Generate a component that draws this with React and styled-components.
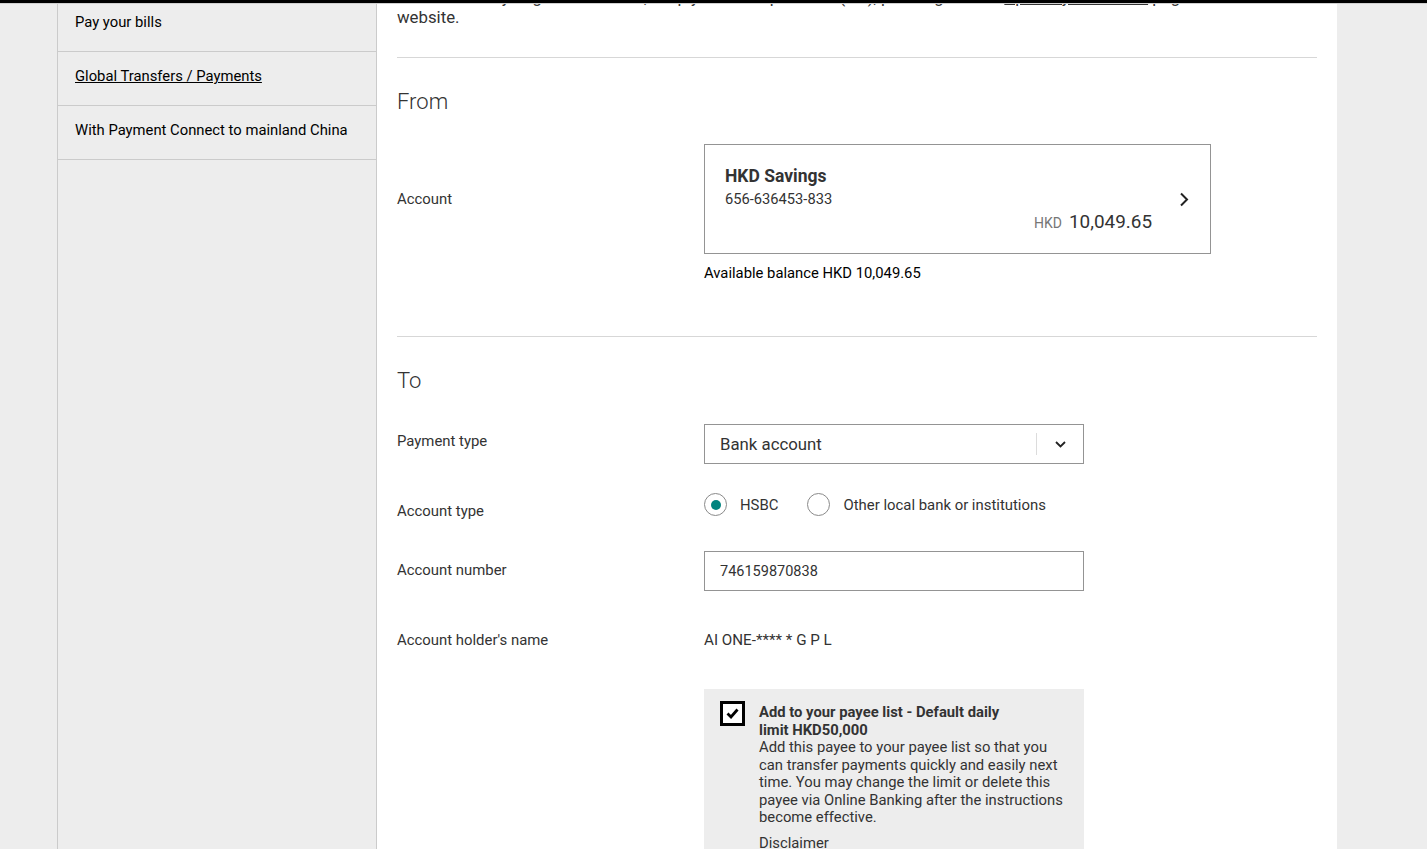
import React from "react";
import styled, { createGlobalStyle } from "styled-components";

const GlobalStyle = createGlobalStyle`
  html, body {
    margin: 0;
    padding: 0;
    background: #ededed;
    font-family: Roboto, "Liberation Sans", Arial, sans-serif;
    color: #333;
    overflow: hidden;
  }
  * { box-sizing: border-box; }
`;

const TopBar = styled.div`
  position: fixed;
  top: 0;
  left: 0;
  right: 0;
  height: 4px;
  background: #000;
  border-bottom: 1px solid #d0d0d0;
  z-index: 5;
`;

const Layout = styled.div`
  display: grid;
  grid-template-columns: 57px 320px 960px 1fr;
  height: 849px;
  overflow: hidden;
  background: #ededed;
`;

const Gutter = styled.div``;

const Sidebar = styled.nav`
  border-left: 1px solid #cbcbcb;
  border-right: 1px solid #cbcbcb;
  background: #ededed;
`;

const NavList = styled.ul`
  list-style: none;
  margin: -2px 0 0;
  padding: 0;
`;

const NavItem = styled.li`
  padding: 16px 17px 20px;
  border-bottom: 1px solid #cbcbcb;
  font-size: 14.8px;
  line-height: 17px;
  color: #000;
  text-decoration: ${(p) => (p.$link ? "underline" : "none")};
`;

const Main = styled.main`
  background: #fff;
  padding: 0 20px;
`;

const Intro = styled.p`
  margin: -13px 0 30px;
  font-size: 16.8px;
  line-height: 20px;
  color: #333;
  white-space: nowrap;
`;

const IntroLink = styled.span`
  text-decoration: underline;
`;

const Divider = styled.hr`
  margin: 0;
  border: 0;
  border-top: 1px solid #d7d7d7;
`;

const SectionTitle = styled.h2`
  margin: 31px 0 0;
  font-size: 22px;
  line-height: 26px;
  font-weight: 300;
  color: #333;
`;

const Row = styled.div`
  display: flex;
  align-items: ${(p) => p.$align || "center"};
  margin-top: ${(p) => p.$top}px;
`;

const Label = styled.div`
  width: 307px;
  flex-shrink: 0;
  font-size: 14.9px;
  line-height: 17px;
  color: #333;
  margin-top: ${(p) => p.$shift || 0}px;
`;

const Field = styled.div`
  display: flex;
  flex-direction: column;
`;

const AccountCard = styled.div`
  width: 507px;
  height: 110px;
  border: 1px solid #949494;
  padding: 20px 21px 19px 20px;
  display: flex;
  align-items: center;
`;

const CardBody = styled.div`
  flex: 1;
  display: flex;
  flex-direction: column;
`;

const CardTitle = styled.div`
  font-size: 17.5px;
  line-height: 21px;
  font-weight: 700;
  color: #333;
`;

const CardNumber = styled.div`
  margin-top: 3px;
  font-size: 14.7px;
  line-height: 18px;
  color: #333;
`;

const Balance = styled.div`
  margin-top: 3px;
  display: flex;
  justify-content: flex-end;
  align-items: baseline;
  gap: 7px;
`;

const Currency = styled.span`
  font-size: 14px;
  color: #767676;
`;

const Amount = styled.span`
  font-size: 18.9px;
  line-height: 22px;
  color: #333;
`;

const ChevronBox = styled.div`
  width: 37px;
  display: flex;
  justify-content: flex-end;
`;

const Available = styled.div`
  margin-top: 11px;
  font-size: 14.8px;
  line-height: 17px;
  color: #000;
`;

const SectionEnd = styled.div`
  height: 54px;
`;

const Select = styled.div`
  width: 380px;
  height: 40px;
  border: 1px solid #949494;
  display: flex;
  align-items: center;
`;

const SelectValue = styled.div`
  flex: 1;
  padding-left: 15px;
  font-size: 16.8px;
  color: #333;
`;

const SelectToggle = styled.div`
  width: 47px;
  height: 22px;
  border-left: 1px solid #dcdcdc;
  display: flex;
  align-items: center;
  justify-content: center;
`;

const RadioGroup = styled.div`
  display: flex;
  align-items: center;
  margin-bottom: 14px;
`;

const RadioOption = styled.label`
  display: flex;
  align-items: center;
  gap: 13px;
  margin-right: 29px;
  font-size: 14.9px;
  line-height: 22px;
  color: #333;
`;

const RadioCircle = styled.span`
  width: 23px;
  height: 23px;
  border-radius: 50%;
  border: 1px solid #8a8a8a;
  display: flex;
  align-items: center;
  justify-content: center;
  &::after {
    content: "";
    width: 10px;
    height: 10px;
    border-radius: 50%;
    background: ${(p) => (p.$checked ? "#00847f" : "transparent")};
  }
`;

const TextInput = styled.div`
  width: 380px;
  height: 40px;
  border: 1px solid #949494;
  padding-left: 15px;
  display: flex;
  align-items: center;
  font-size: 14.5px;
  color: #333;
`;

const Value = styled.div`
  font-size: 15.2px;
  line-height: 17px;
  color: #333;
`;

const PayeePanel = styled.div`
  width: 380px;
  background: #ededed;
  padding: 12px 14px 20px 16px;
  display: flex;
  gap: 14px;
`;

const CheckBox = styled.span`
  width: 25px;
  height: 25px;
  flex-shrink: 0;
  border: 3px solid #000;
  background: #fff;
  display: flex;
  align-items: center;
  justify-content: center;
`;

const PanelText = styled.div`
  display: flex;
  flex-direction: column;
  padding-top: 2px;
  color: #333;
`;

const PanelTitle = styled.div`
  max-width: 262px;
  font-size: 14.8px;
  line-height: 18px;
  font-weight: 700;
`;

const PanelBody = styled.div`
  font-size: 14.8px;
  line-height: 17.5px;
`;

const Disclaimer = styled.div`
  margin-top: 8px;
  font-size: 14.8px;
  line-height: 17.5px;
`;

const ChevronRight = () => (
  <svg width="10" height="15" viewBox="0 0 10 15" fill="none">
    <path d="M2 1.5 L8 7.5 L2 13.5" stroke="#222" strokeWidth="2" />
  </svg>
);

const ChevronDown = () => (
  <svg width="11" height="7" viewBox="0 0 11 7" fill="none">
    <path d="M1 1 L5.5 5.5 L10 1" stroke="#222" strokeWidth="1.8" />
  </svg>
);

const CheckMark = () => (
  <svg width="13" height="11" viewBox="0 0 13 11" fill="none">
    <path d="M1.5 5.5 L5 9 L11.5 1.5" stroke="#000" strokeWidth="2.8" />
  </svg>
);

export default function App() {
  return (
    <>
      <GlobalStyle />
      <TopBar />
      <Layout>
        <Gutter />
        <Sidebar>
          <NavList>
            <NavItem>Pay your bills</NavItem>
            <NavItem $link>Global Transfers / Payments</NavItem>
            <NavItem>With Payment Connect to mainland China</NavItem>
          </NavList>
        </Sidebar>
        <Main>
          <Intro>
            To make sure you get our notices, keep your info up to date (HK), please go to the{" "}
            <IntroLink>Update your details</IntroLink> page of the
            <br />
            website.
          </Intro>
          <Divider />
          <SectionTitle>From</SectionTitle>
          <Row $top={29}>
            <Label>Account</Label>
            <Field>
              <AccountCard>
                <CardBody>
                  <CardTitle>HKD Savings</CardTitle>
                  <CardNumber>656-636453-833</CardNumber>
                  <Balance>
                    <Currency>HKD</Currency>
                    <Amount>10,049.65</Amount>
                  </Balance>
                </CardBody>
                <ChevronBox>
                  <ChevronRight />
                </ChevronBox>
              </AccountCard>
            </Field>
          </Row>
          <Row $top={0}>
            <Label />
            <Available>Available balance HKD 10,049.65</Available>
          </Row>
          <SectionEnd />
          <Divider />
          <SectionTitle>To</SectionTitle>
          <Row $top={30}>
            <Label $shift={-5}>Payment type</Label>
            <Select>
              <SelectValue>Bank account</SelectValue>
              <SelectToggle>
                <ChevronDown />
              </SelectToggle>
            </Select>
          </Row>
          <Row $top={29}>
            <Label>Account type</Label>
            <RadioGroup>
              <RadioOption>
                <RadioCircle $checked />
                HSBC
              </RadioOption>
              <RadioOption>
                <RadioCircle />
                Other local bank or institutions
              </RadioOption>
            </RadioGroup>
          </Row>
          <Row $top={21}>
            <Label $shift={-2}>Account number</Label>
            <TextInput>746159870838</TextInput>
          </Row>
          <Row $top={41}>
            <Label>Account holder's name</Label>
            <Value>AI ONE-**** * G P L</Value>
          </Row>
          <Row $top={40} $align="flex-start">
            <Label />
            <PayeePanel>
              <CheckBox>
                <CheckMark />
              </CheckBox>
              <PanelText>
                <PanelTitle>Add to your payee list - Default daily limit HKD50,000</PanelTitle>
                <PanelBody>
                  Add this payee to your payee list so that you can transfer payments quickly and easily next
                  time. You may change the limit or delete this payee via Online Banking after the instructions
                  become effective.
                </PanelBody>
                <Disclaimer>Disclaimer</Disclaimer>
              </PanelText>
            </PayeePanel>
          </Row>
        </Main>
        <Gutter />
      </Layout>
    </>
  );
}
